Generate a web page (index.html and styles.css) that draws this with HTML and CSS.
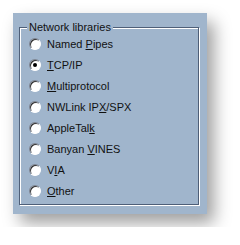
FILE: index.html
```html
<!DOCTYPE html>
<html lang="en">

<head>
    <meta charset="UTF-8">
    <title>Network libraries</title>
    <link rel="stylesheet" href="styles.css">
</head>

<body>
    <div class="panel">
        <fieldset class="group">
            <legend>Network libraries</legend>
            <label class="option"><span class="radio"></span><span>Named <u>P</u>ipes</span></label>
            <label class="option"><span class="radio checked"></span><span><u>T</u>CP/IP</span></label>
            <label class="option"><span class="radio"></span><span><u>M</u>ultiprotocol</span></label>
            <label class="option"><span class="radio"></span><span>NWLink IP<u>X</u>/SPX</span></label>
            <label class="option"><span class="radio"></span><span>AppleTal<u>k</u></span></label>
            <label class="option"><span class="radio"></span><span>Banyan <u>V</u>INES</span></label>
            <label class="option"><span class="radio"></span><span>V<u>I</u>A</span></label>
            <label class="option"><span class="radio"></span><span><u>O</u>ther</span></label>
        </fieldset>
    </div>
</body>

</html>
```
FILE: styles.css
```css
body {
    margin: 0;
    background: #fff;
    font-family: 'Liberation Sans', Arial, sans-serif;
    font-size: 11px;
    color: #111;
}

.panel {
    margin: 13px;
    width: 194px;
    height: 201px;
    box-sizing: border-box;
    padding: 8px 8px 0 6px;
    background: #a0b5cc;
    box-shadow: 7px 9px 16px rgba(0, 0, 0, 0.38);
}

.group {
    margin: 0;
    padding: 4px 0 0 9px;
    height: 184px;
    box-sizing: border-box;
    border: 1px solid #4e5f78;
    box-shadow: inset 1px 1px #fff, 1px 1px #fff;
    display: flex;
    flex-direction: column;
    gap: 7px;
}

.group legend {
    padding: 0 2px;
    margin-left: -2px;
    background: #a0b5cc;
    font-size: 11px;
    line-height: 12px;
}

.option {
    display: flex;
    align-items: center;
    gap: 6px;
    height: 14px;
    font-size: 11px;
}

.radio {
    width: 12px;
    height: 12px;
    box-sizing: border-box;
    border-radius: 50%;
    background: #fff;
    border: 1px solid;
    border-color: #7a8290 #fff #fff #7a8290;
    box-shadow: inset 1px 1px #303030;
    position: relative;
}

.radio.checked::after {
    content: "";
    position: absolute;
    left: 3px;
    top: 3px;
    width: 4px;
    height: 4px;
    border-radius: 50%;
    background: #000;
}
```
